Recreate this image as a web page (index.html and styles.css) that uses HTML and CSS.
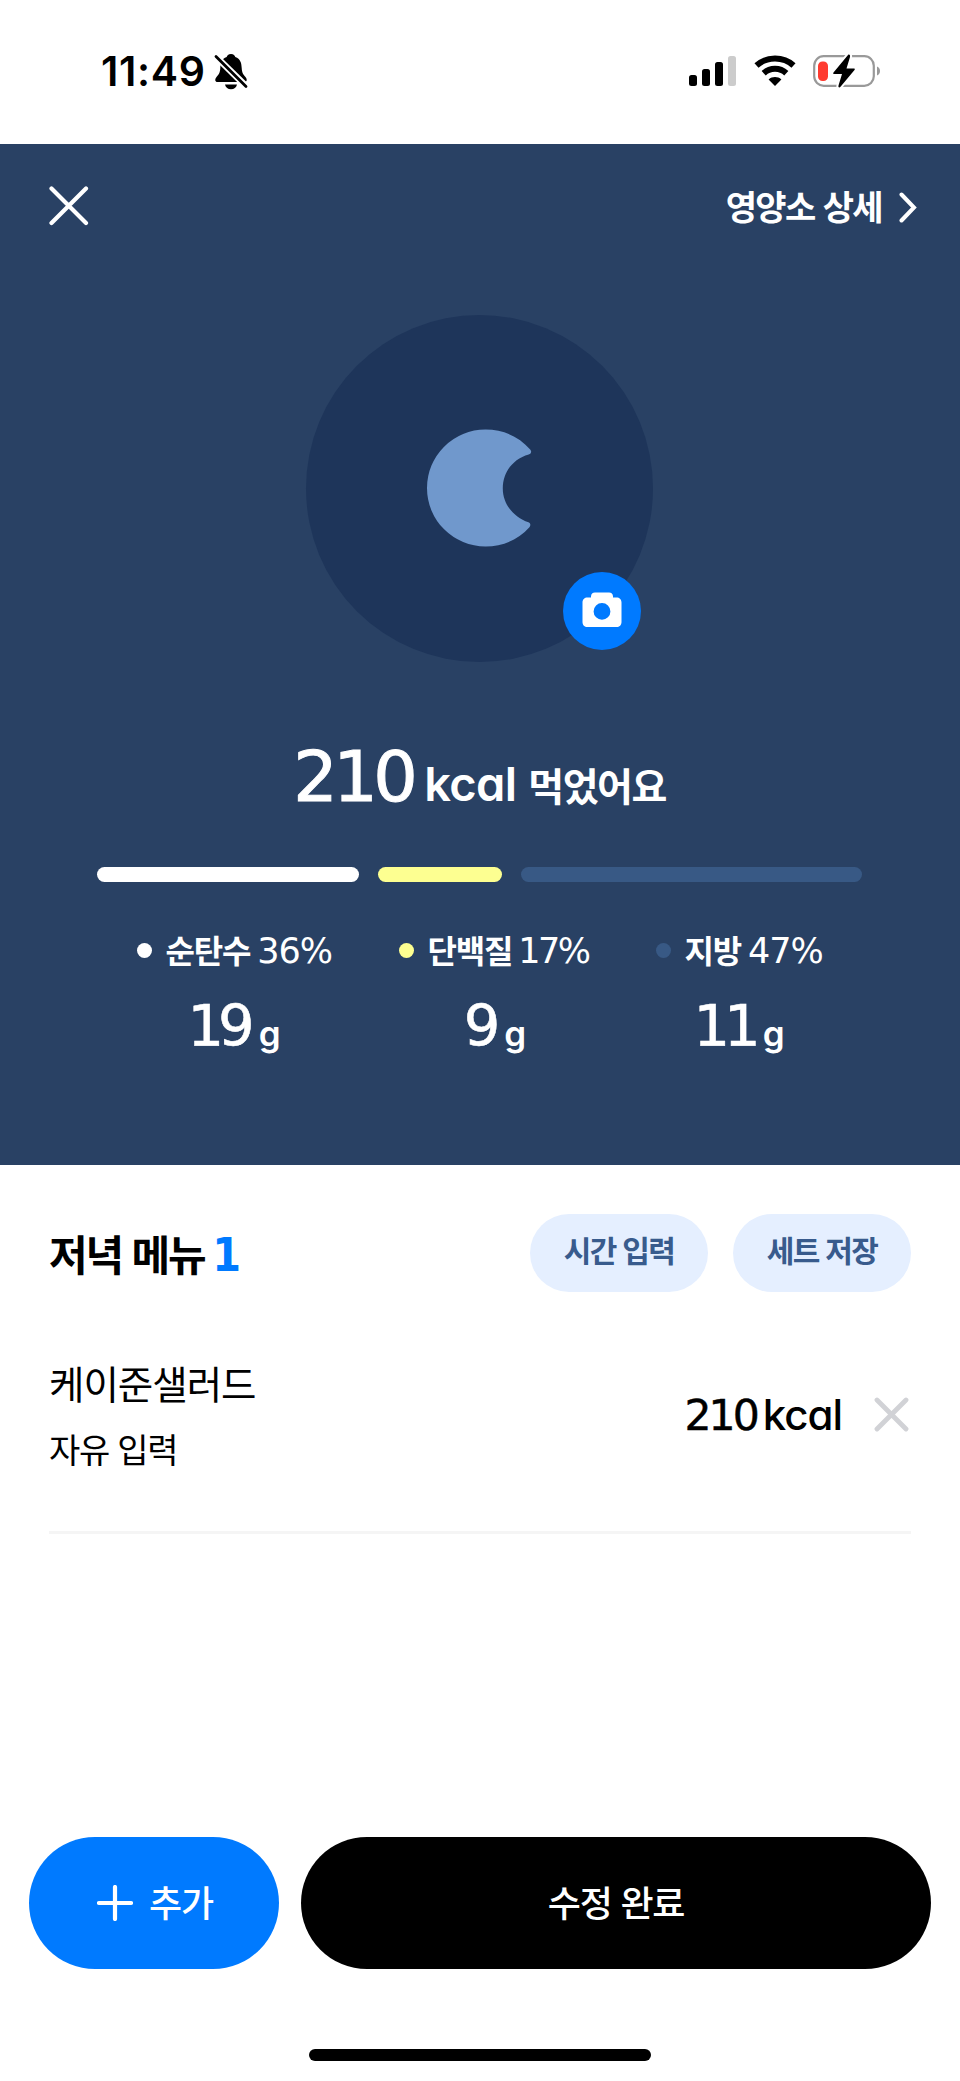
FILE: index.html
```html
<!DOCTYPE html>
<html lang="ko">
<head>
<meta charset="utf-8">
<title>저녁 메뉴</title>
<link rel="stylesheet" href="styles.css">
</head>
<body>
<div class="status">
  <div class="status-left">
    <span class="clock">11:49</span>
    <svg class="bell" width="34" height="37" viewBox="0 0 34 37">
      <path d="M17 1c-2.600 0-4 1.500-4.300 3C7.500 6 6.500 10 6.300 15 6 20 5 21 2.500 24 .500 26.500 1 29 3.500 29h27c2.500 0 3-2.500 1-5-2.500-3-3.500-4-3.800-9-.200-5-1.200-9-6.400-11C21 2.500 19.600 1 17 1zM11 31.500h12c-.500 3-3 4.800-6 4.800s-5.500-1.800-6-4.800z"/>
      <path d="M1.800 3.500l30.500 30" stroke="#fff" stroke-width="6.600"/>
      <path d="M2 3.500l30 30" stroke="#000" stroke-width="2.800" stroke-linecap="round"/>
    </svg>
  </div>
  <div class="status-right">
    <svg width="48" height="32" viewBox="0 0 48 32">
      <rect x="0" y="20" width="8" height="11" rx="2.500"/>
      <rect x="13" y="14" width="8" height="17" rx="2.500"/>
      <rect x="26" y="7" width="8" height="24" rx="2.500"/>
      <rect x="39" y="1" width="8" height="30" rx="2.500" fill="#ccc"/>
    </svg>
    <svg width="42" height="32" viewBox="0 0 42 32">
      <path d="M2.500 10.500C12.500 1.200 29.500 1.200 39.500 10.500M9.700 18.200C16 12.300 26 12.300 32.300 18.200" fill="none" stroke="#000" stroke-width="6"/>
      <path d="M21 31l-6.400-6.600c3.700-3.100 9.100-3.100 12.800 0z"/>
    </svg>
    <svg width="68" height="36" viewBox="0 0 68 36">
      <rect x="1.200" y="3.200" width="59.600" height="29.600" rx="9.500" fill="#fff" stroke="#999" stroke-width="2.200"/>
      <path d="M64 13.500c4 1.500 4 7.500 0 9z" fill="#999"/>
      <rect x="5" y="8.500" width="10" height="19.500" rx="4.500" fill="#ff3b30"/>
      <path d="M35 2L20.500 19.500c-.600.800-.300 1.500.700 1.500H29l-3.500 11.500c-.500 2 1 2.500 2 1.200L41.500 17c.600-.800.300-1.500-.700-1.500H33.500L37 4c.500-2-.800-3.200-2-2z" stroke="#fff" stroke-width="4" paint-order="stroke"/>
    </svg>
  </div>
</div>

<section class="summary">
  <div class="nav">
    <svg width="40" height="40" viewBox="0 0 40 40"><path d="M2.500 2.500l34.500 34.500M37 2.500L2.500 37" stroke="#fff" stroke-width="4.200" stroke-linecap="round"/></svg>
    <div class="detail">
      <span>영양소 상세</span>
      <svg width="18" height="31" viewBox="0 0 18 31"><path d="M2.500 2.500L15 15.500 2.500 28.500" fill="none" stroke="#fff" stroke-width="4" stroke-linecap="round"/></svg>
    </div>
  </div>

  <div class="photo">
    <svg width="106" height="118" viewBox="0 0 106 118">
      <path d="M58.500 .500C77 .500 92.500 8 103.200 20.500c1.800 2.200 1 4.300-1.500 5C86 30 75.800 43 75.800 59.500c0 15.500 10.500 28.500 25.700 33.800 2 .700 2.500 3 .900 4.900C91.500 110.500 76 117.500 58.500 117.500a58.500 58.500 0 0 1 0-117z" fill="#7098cc"/>
    </svg>
    <div class="camera">
      <svg width="40" height="36" viewBox="0 0 40 36">
        <path fill-rule="evenodd" d="M13 .500h14c2.400 0 4 1.600 4 4v1h3.500c3 0 5 2 5 5v19.500c0 3-2 5-5 5h-29c-3 0-5-2-5-5V10.500c0-3 2-5 5-5H9v-1c0-2.400 1.600-4 4-4zM20 11a8.400 8.400 0 1 0 0 16.800a8.400 8.400 0 1 0 0-16.800z" fill="#fff"/>
      </svg>
    </div>
  </div>

  <div class="total">
    <span class="total-num">210</span>
    <span class="total-unit">kcal</span>
    <span class="total-text">먹었어요</span>
  </div>

  <div class="bars">
    <div class="bar carb"></div>
    <div class="bar protein"></div>
    <div class="bar fat"></div>
  </div>

  <div class="macros">
    <div class="macro macro-carb">
      <div class="label"><i class="dot carb"></i><span class="name">순탄수</span><span class="pct">36%</span></div>
      <div class="amount"><span class="num">19</span><span class="gram">g</span></div>
    </div>
    <div class="macro macro-protein">
      <div class="label"><i class="dot protein"></i><span class="name">단백질</span><span class="pct">17%</span></div>
      <div class="amount"><span class="num">9</span><span class="gram">g</span></div>
    </div>
    <div class="macro macro-fat">
      <div class="label"><i class="dot fat"></i><span class="name">지방</span><span class="pct">47%</span></div>
      <div class="amount"><span class="num">11</span><span class="gram">g</span></div>
    </div>
  </div>
</section>

<main class="menu">
  <div class="menu-head">
    <h1><span>저녁 메뉴</span><b>1</b></h1>
    <div class="chips">
      <div class="chip">시간 입력</div>
      <div class="chip">세트 저장</div>
    </div>
  </div>
  <div class="item">
    <div class="item-text">
      <div class="item-name">케이준샐러드</div>
      <div class="item-sub">자유 입력</div>
    </div>
    <div class="item-side">
      <div class="item-kcal"><span class="item-num">210</span><span class="item-unit">kcal</span></div>
      <svg width="35" height="35" viewBox="0 0 35 35"><path d="M3 3l29 29M32 3L3 32" stroke="#d1d2d6" stroke-width="4.800" stroke-linecap="round"/></svg>
    </div>
  </div>
</main>

<footer class="actions">
  <div class="btn add">
    <svg width="36" height="36" viewBox="0 0 36 36"><path d="M18 2v32M2 18h32" stroke="#fff" stroke-width="4.200" stroke-linecap="round"/></svg>
    <span>추가</span>
  </div>
  <div class="btn done">수정 완료</div>
</footer>
<div class="home"></div>
</body>
</html>
```

FILE: styles.css
```css
* { box-sizing: border-box; }
body {
  margin: 0;
  width: 960px;
  height: 2081px;
  background: #fff;
  color: #000;
  font-family: "Noto Sans CJK KR", sans-serif;
  white-space: nowrap;
  overflow: hidden;
  display: flex;
  flex-direction: column;
}
svg { display: block; flex: none; }

.status {
  height: 144px;
  padding: 51px 79px 0 101px;
  display: flex;
  justify-content: space-between;
  align-items: flex-start;
}
.status-left { display: flex; padding-top: 2px; }
.clock {
  width: 113px;
  font: 600 41px/37px Inter, sans-serif;
  letter-spacing: .7px;
}
.status-right { display: flex; align-items: center; gap: 17px; padding-top: 2px; }

.summary {
  height: 1021px;
  padding-right: 1px;
  background: #294164;
  color: #fff;
  display: flex;
  flex-direction: column;
  align-items: center;
}
.nav {
  width: 100%;
  height: 170px;
  padding: 42px 42px 0 48.5px;
  display: flex;
  justify-content: space-between;
  align-items: flex-start;
}
.detail {
  display: flex;
  align-items: center;
  gap: 17px;
  height: 40px;
  font-weight: 700;
  font-size: 34px;
  letter-spacing: -1.6px;
  line-height: 40px;
}
.detail svg { margin-top: 2px; }

.photo {
  position: relative;
  width: 347px;
  height: 347px;
  margin-top: 1px;
  border-radius: 50%;
  background: #1e355a;
  display: flex;
  align-items: center;
  justify-content: center;
}
.photo > svg { margin-bottom: 1px; }
.camera {
  position: absolute;
  right: 12px;
  bottom: 12px;
  width: 78px;
  height: 78px;
  border-radius: 50%;
  background: #007aff;
  display: flex;
  align-items: center;
  justify-content: center;
  padding-bottom: 3px;
}

.total {
  margin-top: 75px;
  height: 80px;
  display: flex;
  align-items: baseline;
}
.total-num {
  font: 400 70px/80px "DejaVu Sans", sans-serif;
  letter-spacing: -4.500px;
  -webkit-text-stroke: 1px #fff;
}
.total-unit {
  margin-left: 11px;
  font: 600 47px/50px Inter, sans-serif;
  font-feature-settings: "cv11";
  letter-spacing: -.7px;
}
.total-text {
  margin-left: 12px;
  font-size: 39px;
  font-weight: 700;
  line-height: 50px;
  letter-spacing: -1.5px;
}

.bars {
  margin-top: 50px;
  width: 765px;
  height: 15px;
  display: grid;
  grid-template-columns: 262px 124px 341px;
  justify-content: space-between;
}
.bar { border-radius: 8px; }
.carb { background: #fff; }
.protein { background: #fdff91; }
.fat { background: #385985; }

.macros {
  margin-top: 43px;
  display: flex;
  gap: 67px;
}
.macro-carb { width: 195px; }
.macro-protein { width: 190px; }
.macro-fat { width: 167px; }
.label { display: flex; align-items: center; height: 50px; }
.dot { width: 15px; height: 15px; border-radius: 50%; flex: none; }
.name {
  margin-left: 14px;
  padding-bottom: 2px;
  font-size: 32px;
  font-weight: 700;
  line-height: 46px;
  letter-spacing: -1.2px;
}
.pct {
  margin-left: 7px;
  padding-top: 1px;
  font: 400 35px/50px "DejaVu Sans", sans-serif;
  letter-spacing: -1px;
}
.macro-protein .pct { margin-left: 6px; letter-spacing: -2.500px; }
.amount {
  margin-top: 17px;
  height: 70px;
  display: flex;
  align-items: baseline;
  justify-content: center;
}
.macro-protein .amount { padding-left: 3px; }
.num {
  font: 400 57.500px/70px "DejaVu Sans", sans-serif;
  letter-spacing: -6px;
  -webkit-text-stroke: .6px #fff;
}
.gram {
  margin-left: 10px;
  font: 600 35px/40px Inter, sans-serif;
}
.macro-fat .gram { margin-left: 8px; }

.menu { height: 672px; padding: 49px 49px 0; }
.menu-head {
  height: 78px;
  display: flex;
  justify-content: space-between;
}
h1 {
  margin: 0;
  display: flex;
  align-items: baseline;
  font-size: 42px;
  font-weight: 700;
  line-height: 78px;
  letter-spacing: -2.2px;
}
h1 b {
  margin-left: 8px;
  font: 700 46px/60px "DejaVu Sans Condensed", "DejaVu Sans", sans-serif;
  font-stretch: condensed;
  color: #007aff;
}
.chips { display: flex; gap: 25px; }
.chip {
  width: 178px;
  height: 78px;
  border-radius: 39px;
  background: #e5efff;
  color: #385b8d;
  text-align: center;
  font-size: 30px;
  font-weight: 700;
  line-height: 71px;
  letter-spacing: -1.7px;
}
.item {
  height: 242px;
  padding-top: 60px;
  border-bottom: 3px solid #f5f5f5;
  display: flex;
  justify-content: space-between;
}
.item-name {
  font-size: 38.500px;
  line-height: 60px;
  letter-spacing: -1px;
}
.item-sub {
  margin-top: 7px;
  font-size: 34px;
  line-height: 60px;
  letter-spacing: -1.3px;
}
.item-side {
  height: 124px;
  padding-right: 2px;
  display: flex;
  align-items: center;
  gap: 32px;
}
.item-kcal { display: flex; align-items: baseline; padding-top: 3px; }
.item-num {
  font: 400 42.500px/50px "DejaVu Sans", sans-serif;
  letter-spacing: -3px;
  -webkit-text-stroke: .5px #000;
}
.item-unit {
  margin-left: 6px;
  font: 500 42px/50px Inter, sans-serif;
  font-feature-settings: "cv11";
  letter-spacing: -1px;
}

.actions {
  display: flex;
  gap: 22px;
  padding: 0 29px;
  height: 132px;
}
.btn {
  border-radius: 66px;
  color: #fff;
  display: flex;
  align-items: center;
  justify-content: center;
  font-size: 36px;
  font-weight: 500;
  line-height: 54px;
  letter-spacing: -1.200px;
}
.add { width: 250px; background: #007aff; gap: 16px; padding-left: 2px; }
.add span { padding-bottom: 4px; }
.done { flex: 1; background: #000; padding-bottom: 5px; }
.home {
  width: 342px;
  height: 12px;
  margin: 80px auto 0;
  border-radius: 6px;
  background: #000;
}
```
